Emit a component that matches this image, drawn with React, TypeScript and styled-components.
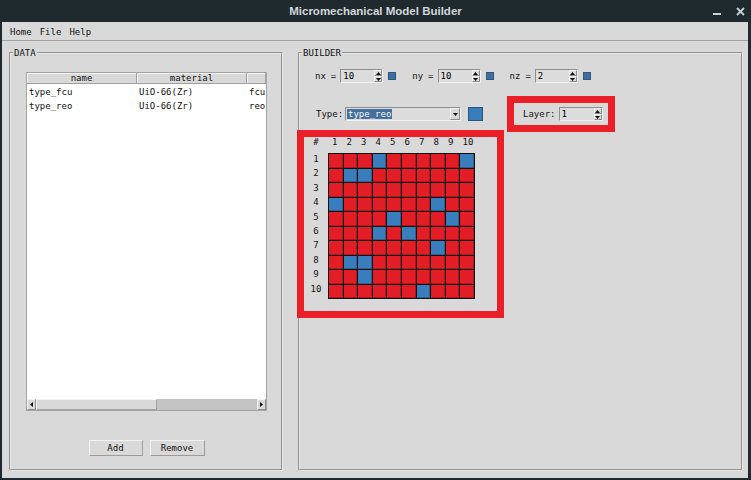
import React from 'react';
import styled, { createGlobalStyle } from 'styled-components';

const GlobalStyle = createGlobalStyle`
  html, body { margin: 0; padding: 0; background: #1f2a2f; }
  * { box-sizing: border-box; }
`;

const mono = `"DejaVu Sans Mono", monospace`;
const RED = '#e31d25';
const BLUE = '#3a7dbd';
const MARK = '#ea1f27';

const Window = styled.div`
  width: 751px;
  height: 480px;
  background: #1f2a2f;
  display: flex;
  flex-direction: column;
  overflow: hidden;
`;

const TitleBar = styled.div`
  height: 22px;
  flex: none;
  display: grid;
  grid-template-columns: 1fr auto 1fr;
  align-items: center;
  color: #d3d7d9;
  font: bold 11.5px "Liberation Sans", Arial, sans-serif;
`;

const Title = styled.div`
  grid-column: 2;
`;

const WinControls = styled.div`
  grid-column: 3;
  display: flex;
  justify-content: flex-end;
  align-items: center;
  gap: 15px;
  padding-right: 6px;
`;

const Body = styled.div`
  flex: 1;
  margin: 0 3px 2px 2px;
  background: #d9d9d9;
  display: flex;
  flex-direction: column;
  min-height: 0;
`;

const MenuBar = styled.div`
  height: 19px;
  flex: none;
  display: flex;
  align-items: center;
  gap: 8px;
  padding: 2px 0 0 8px;
  border-bottom: 1px solid #a2a2a2;
  font: 9px ${mono};
  color: #111;
`;

const Content = styled.div`
  flex: 1;
  display: flex;
  gap: 15px;
  padding: 6px 5px 7px 7px;
  min-height: 0;
`;

const Frame = styled.fieldset<{ $w?: number }>`
  margin: 0;
  padding: 0;
  min-width: 0;
  border: 2px groove #e6e6e6;
  ${(p) => (p.$w ? `width: ${p.$w}px; flex: none;` : 'flex: 1;')}
`;

const Legend = styled.legend`
  margin-left: 2px;
  padding: 0 1px;
  font: 9px/12px ${mono};
  color: #111;
`;

/* ---------- DATA panel ---------- */

const DataInner = styled.div`
  display: flex;
  flex-direction: column;
  padding-left: 15px;
`;

const Tree = styled.div`
  margin-top: 13px;
  width: 241px;
  height: 339px;
  border: 1px solid #a3a3a3;
  background: #fff;
  display: flex;
  flex-direction: column;
  font: 9px ${mono};
  color: #111;
`;

const TreeHeader = styled.div`
  display: flex;
  height: 11px;
  flex: none;
  overflow: hidden;
`;

const HeadCell = styled.div<{ $w?: number }>`
  ${(p) => (p.$w ? `width: ${p.$w}px; flex: none;` : 'flex: 1;')}
  background: #d9d9d9;
  border-right: 1px solid #a0a0a0;
  border-bottom: 1px solid #a0a0a0;
  box-shadow: inset 1px 1px 0 #f4f4f4;
  text-align: center;
  line-height: 11px;
  white-space: nowrap;
  overflow: hidden;
`;

const TreeRows = styled.div`
  flex: 1;
  padding-top: 1px;
`;

const TreeRow = styled.div`
  display: flex;
  height: 14px;
  align-items: center;
`;

const RowCell = styled.div<{ $w?: number }>`
  ${(p) => (p.$w ? `width: ${p.$w}px; flex: none;` : 'flex: 1;')}
  padding-left: 2px;
  white-space: nowrap;
  overflow: hidden;
`;

const HScroll = styled.div`
  height: 11px;
  flex: none;
  display: flex;
  background: #c3c3c3;
`;

const ScrollArrow = styled.div`
  width: 9px;
  flex: none;
  display: flex;
  align-items: center;
  justify-content: center;
  background: #d9d9d9;
  border: 1px solid;
  border-color: #f4f4f4 #8f8f8f #8f8f8f #f4f4f4;
`;

const ScrollThumb = styled.div<{ $w: number }>`
  width: ${(p) => p.$w}px;
  flex: none;
  background: #d9d9d9;
  border: 1px solid;
  border-color: #f4f4f4 #a0a0a0 #a0a0a0 #f4f4f4;
`;

const ScrollTrough = styled.div`
  flex: 1;
`;

const ButtonRow = styled.div`
  margin-top: 29px;
  width: 241px;
  display: flex;
  justify-content: center;
  gap: 7px;
`;

const Button = styled.button<{ $w: number }>`
  width: ${(p) => p.$w}px;
  height: 16px;
  padding: 0;
  background: #d9d9d9;
  border: 1px solid;
  border-color: #f2f2f2 #9c9c9c #9c9c9c #f2f2f2;
  font: 9px/14px ${mono};
  color: #111;
`;

/* ---------- BUILDER panel ---------- */

const BuilderInner = styled.div`
  display: flex;
  flex-direction: column;
  align-items: flex-start;
  padding-left: 15px;
  font: 9px ${mono};
  color: #111;
`;

const DimRow = styled.div`
  margin-top: 10px;
  display: flex;
  align-items: center;
  gap: 16px;
`;

const DimGroup = styled.div`
  display: flex;
  align-items: center;
`;

const DimLabel = styled.span`
  display: flex;
  gap: 5px;
  margin-right: 4px;
`;

const Spin = styled.div<{ $w: number }>`
  width: ${(p) => p.$w}px;
  height: 14px;
  display: flex;
  background: #dcdcdc;
  border: 1px solid;
  border-color: #8e8e8e #f2f2f2 #f2f2f2 #8e8e8e;
`;

const SpinValue = styled.span`
  flex: 1;
  padding-left: 2px;
  line-height: 12px;
  color: #000;
`;

const SpinArrows = styled.div`
  width: 8px;
  display: flex;
  flex-direction: column;
`;

const ArrowBtn = styled.div`
  flex: 1;
  display: flex;
  align-items: center;
  justify-content: center;
  background: #d9d9d9;
  border: 1px solid;
  border-color: #f4f4f4 #8a8a8a #8a8a8a #f4f4f4;
`;

const Swatch = styled.div<{ $size: number; $color: string }>`
  width: ${(p) => p.$size}px;
  height: ${(p) => p.$size}px;
  margin-left: 5px;
  background: ${(p) => p.$color};
  border: 1px solid #2f5680;
`;

const TypeRow = styled.div`
  margin-top: 13px;
  display: flex;
  align-items: center;
`;

const TypeLabel = styled.span`
  width: 29px;
  margin-left: 1px;
`;

const Combo = styled.div`
  width: 116px;
  height: 14px;
  display: flex;
  background: #dcdcdc;
  border: 1px solid;
  border-color: #8e8e8e #f2f2f2 #f2f2f2 #8e8e8e;
`;

const ComboText = styled.span`
  flex: 1;
  padding: 1px 0 0 1px;
`;

const Selected = styled.span`
  display: inline-block;
  padding: 0 1px;
  background: #46709c;
  color: #f4f4f4;
  line-height: 10px;
`;

const ComboArrow = styled(ArrowBtn)`
  flex: none;
  width: 10px;
`;

const ColorButton = styled.div`
  width: 15px;
  height: 14px;
  margin-left: 7px;
  background: ${BLUE};
  border: 1px solid #2a5684;
`;

const LayerBox = styled.div`
  margin-left: 24px;
  width: 108px;
  height: 36px;
  border: 7px solid ${MARK};
  display: flex;
  align-items: center;
  padding-left: 9px;
  gap: 3px;
`;

const GridBox = styled.div`
  margin: -2px 0 0 -18px;
  width: 207px;
  height: 188px;
  border: 7px solid ${MARK};
  display: grid;
  grid-template-columns: 24px 147px;
  grid-template-rows: 16px 146px;
  font: 9px/11px ${mono};
  color: #111;
`;

const Corner = styled.div`
  text-align: center;
`;

const ColHeads = styled.div`
  display: grid;
  grid-template-columns: repeat(10, 1fr);
  padding: 0 1px;
`;

const ColLabel = styled.span`
  padding-left: 3px;
  white-space: nowrap;
`;

const RowHeads = styled.div`
  display: grid;
  grid-template-rows: repeat(10, 1fr);
  padding: 1px 0;
`;

const RowLabel = styled.span`
  text-align: center;
`;

const Board = styled.div`
  display: grid;
  grid-template-columns: repeat(10, 1fr);
  grid-template-rows: repeat(10, 1fr);
  gap: 1px;
  padding: 1px;
  background: #111;
`;

const Cell = styled.div<{ $blue: boolean }>`
  background: ${(p) => (p.$blue ? BLUE : RED)};
  box-shadow: inset -1px -1px 0 rgba(0, 0, 0, 0.22);
`;

const Tri = ({ dir }: { dir: 'up' | 'down' | 'left' | 'right' }) => {
  const d = {
    up: 'M0 3 L2.5 0 L5 3 Z',
    down: 'M0 0 L5 0 L2.5 3 Z',
    left: 'M3 0 L3 5 L0 2.5 Z',
    right: 'M0 0 L3 2.5 L0 5 Z',
  }[dir];
  const horiz = dir === 'up' || dir === 'down';
  return (
    <svg width={horiz ? 5 : 3} height={horiz ? 3 : 5} viewBox={horiz ? '0 0 5 3' : '0 0 3 5'}>
      <path d={d} fill="#111" />
    </svg>
  );
};

const SpinBox = ({ value, w }: { value: string; w: number }) => (
  <Spin $w={w}>
    <SpinValue>{value}</SpinValue>
    <SpinArrows>
      <ArrowBtn><Tri dir="up" /></ArrowBtn>
      <ArrowBtn><Tri dir="down" /></ArrowBtn>
    </SpinArrows>
  </Spin>
);

const blueCells: Record<number, number[]> = {
  1: [4, 10],
  2: [2, 3],
  3: [],
  4: [1, 8],
  5: [5, 9],
  6: [4, 6],
  7: [8],
  8: [2, 3],
  9: [3],
  10: [7],
};

const rows = [
  { name: 'type_fcu', material: 'UiO-66(Zr)', topo: 'fcu' },
  { name: 'type_reo', material: 'UiO-66(Zr)', topo: 'reo' },
];

const dims = [
  { label: 'nx', value: '10' },
  { label: 'ny', value: '10' },
  { label: 'nz', value: '2' },
];

const idx = Array.from({ length: 10 }, (_, i) => i + 1);

export default function App() {
  return (
    <Window>
      <GlobalStyle />
      <TitleBar>
        <Title>Micromechanical Model Builder</Title>
        <WinControls>
          <svg width="8" height="10" viewBox="0 0 8 10">
            <rect x="0" y="7" width="8" height="2" fill="#c9cfd2" />
          </svg>
          <svg width="9" height="9" viewBox="0 0 9 9">
            <path d="M1 1 L8 8 M8 1 L1 8" stroke="#c9cfd2" strokeWidth="1.8" />
          </svg>
        </WinControls>
      </TitleBar>
      <Body>
        <MenuBar>
          <span>Home</span>
          <span>File</span>
          <span>Help</span>
        </MenuBar>
        <Content>
          <Frame $w={274}>
            <Legend>DATA</Legend>
            <DataInner>
              <Tree>
                <TreeHeader>
                  <HeadCell $w={110}>name</HeadCell>
                  <HeadCell $w={110}>material</HeadCell>
                  <HeadCell />
                </TreeHeader>
                <TreeRows>
                  {rows.map((r) => (
                    <TreeRow key={r.name}>
                      <RowCell $w={110}>{r.name}</RowCell>
                      <RowCell $w={110}>{r.material}</RowCell>
                      <RowCell>{r.topo}</RowCell>
                    </TreeRow>
                  ))}
                </TreeRows>
                <HScroll>
                  <ScrollArrow><Tri dir="left" /></ScrollArrow>
                  <ScrollThumb $w={121} />
                  <ScrollTrough />
                  <ScrollArrow><Tri dir="right" /></ScrollArrow>
                </HScroll>
              </Tree>
              <ButtonRow>
                <Button $w={54}>Add</Button>
                <Button $w={55}>Remove</Button>
              </ButtonRow>
            </DataInner>
          </Frame>
          <Frame>
            <Legend>BUILDER</Legend>
            <BuilderInner>
              <DimRow>
                {dims.map((d) => (
                  <DimGroup key={d.label}>
                    <DimLabel>
                      <span>{d.label}</span>
                      <span>=</span>
                    </DimLabel>
                    <SpinBox value={d.value} w={43} />
                    <Swatch $size={8} $color="#3f6e9c" />
                  </DimGroup>
                ))}
              </DimRow>
              <TypeRow>
                <TypeLabel>Type:</TypeLabel>
                <Combo>
                  <ComboText>
                    <Selected>type_reo</Selected>
                  </ComboText>
                  <ComboArrow><Tri dir="down" /></ComboArrow>
                </Combo>
                <ColorButton />
                <LayerBox>
                  <span>Layer:</span>
                  <SpinBox value="1" w={44} />
                </LayerBox>
              </TypeRow>
              <GridBox>
                <Corner>#</Corner>
                <ColHeads>
                  {idx.map((c) => (
                    <ColLabel key={c}>{c}</ColLabel>
                  ))}
                </ColHeads>
                <RowHeads>
                  {idx.map((r) => (
                    <RowLabel key={r}>{r}</RowLabel>
                  ))}
                </RowHeads>
                <Board>
                  {idx.map((r) =>
                    idx.map((c) => (
                      <Cell key={`${r}-${c}`} $blue={blueCells[r].includes(c)} />
                    ))
                  )}
                </Board>
              </GridBox>
            </BuilderInner>
          </Frame>
        </Content>
      </Body>
    </Window>
  );
}
